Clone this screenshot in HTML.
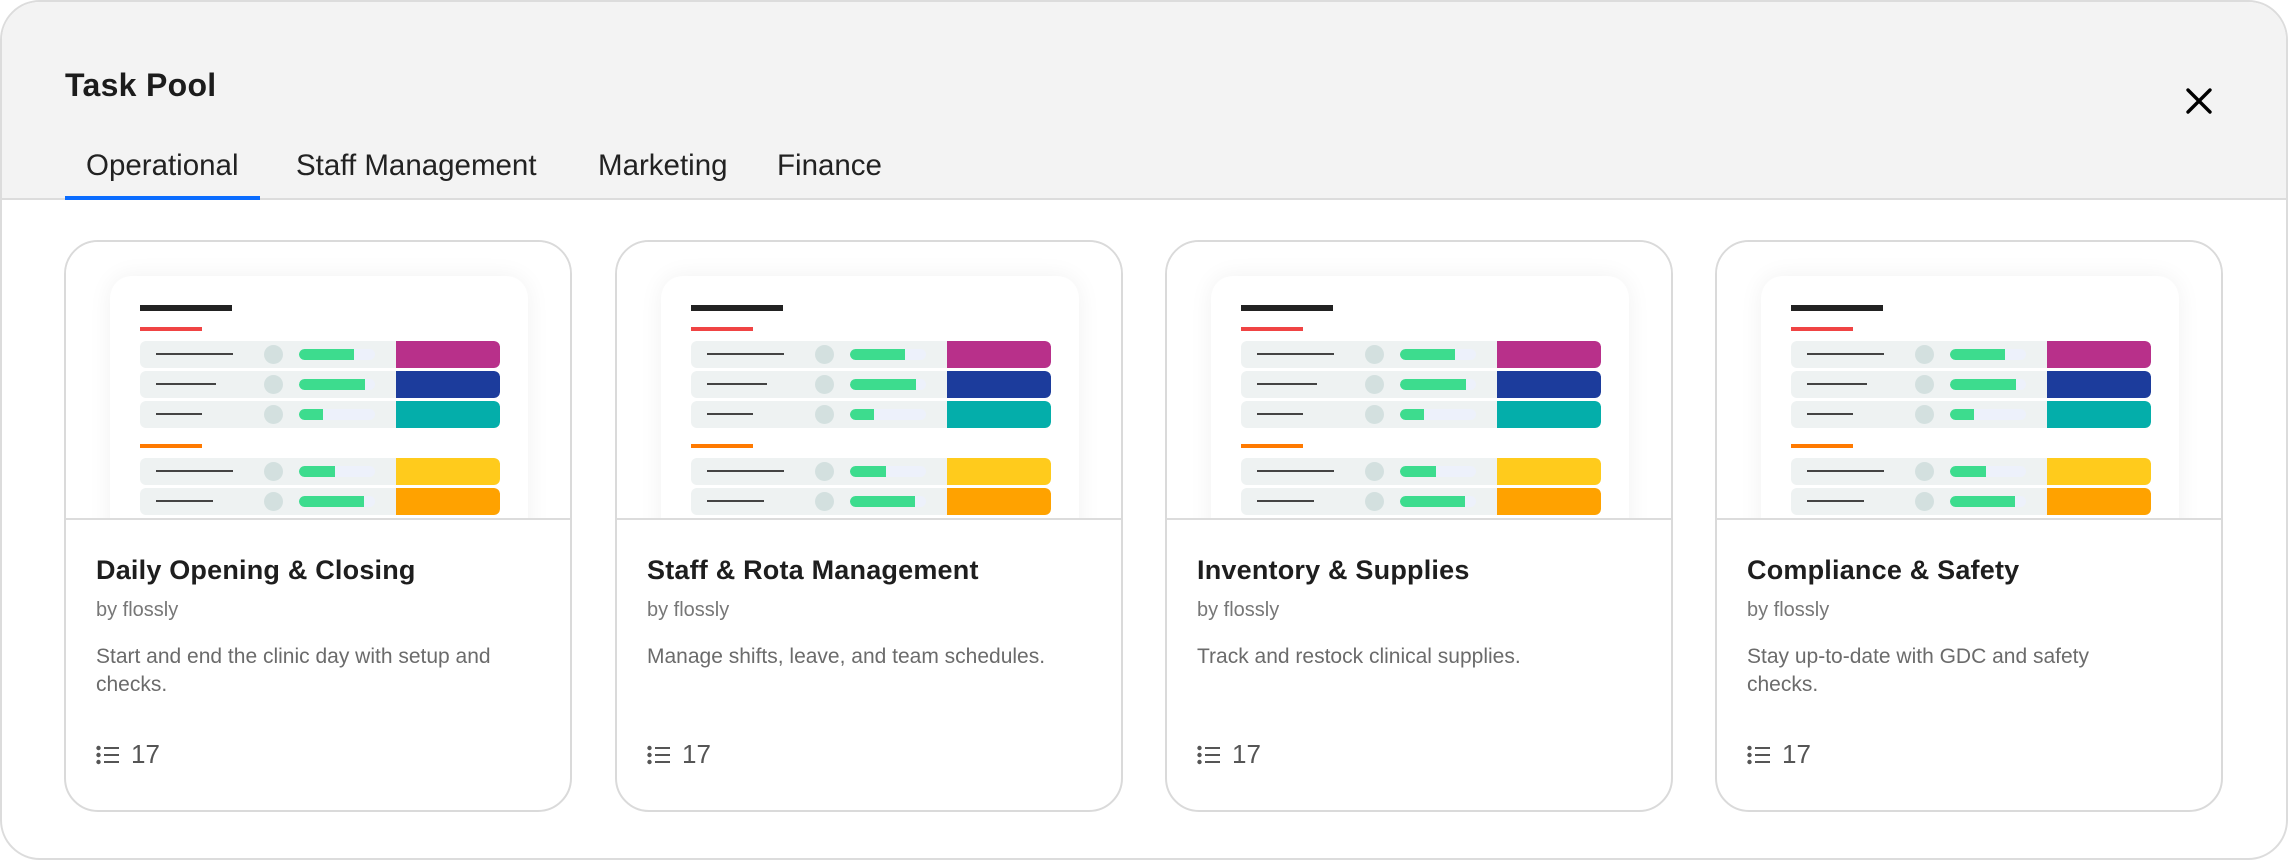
<!DOCTYPE html>
<html><head><meta charset="utf-8"><style>
*{box-sizing:border-box;margin:0;padding:0}
body{width:2288px;height:860px;background:#fff;font-family:"Liberation Sans",sans-serif;position:relative;overflow:hidden}
.outer{position:absolute;left:0;top:0;width:2288px;height:860px;border:2px solid #dcdcdc;border-radius:40px;overflow:hidden;background:#fff}
.head{position:absolute;left:0;top:0;right:0;height:198px;background:#f3f3f3;border-bottom:2px solid #dcdcdc}
.title{position:absolute;left:63px;top:65px;font-size:32px;font-weight:bold;color:#1c1c1c;letter-spacing:0.3px}
.tab{position:absolute;top:147px;font-size:29.5px;color:#222}
.ul{position:absolute;left:63px;top:194px;width:195px;height:4px;background:#0a6cff}
.card{position:absolute;top:240px;width:508px;height:572px;border:2px solid #dadada;border-radius:34px;overflow:hidden;background:#fff}
.img{position:absolute;left:0;top:0;width:100%;height:278px;overflow:hidden;background:#fff;border-bottom:2px solid #dcdcdc}
.panel{position:absolute;left:44px;top:34px;width:418px;height:300px;background:#fff;border-radius:22px;box-shadow:0 0 24px rgba(0,0,0,0.06)}
.a{position:absolute}
.row{position:absolute;width:360px;height:27px;background:#eef2f2;border-radius:6px;overflow:hidden}
.row .ln{position:absolute;left:16px;top:12px;height:2px;background:#444}
.row .c{position:absolute;left:124px;top:4px;width:19px;height:19px;border-radius:50%;background:#d3e0df}
.row .tr{position:absolute;left:159px;top:8px;width:76px;height:11px;border-radius:6px;background:#edf1fb;overflow:hidden}
.row .g{position:absolute;left:0;top:0;height:11px;background:#3ddc8e;border-radius:6px 0 0 6px}
.row .b{position:absolute;left:256px;top:0;width:104px;height:27px;border-radius:0 6px 6px 0}
.t{position:absolute;left:30px;top:313px;font-size:27px;font-weight:bold;color:#1e1e1e;letter-spacing:0.2px}
.by{position:absolute;left:30px;top:357px;font-size:20px;color:#777}
.d{position:absolute;left:30px;top:401px;font-size:21px;line-height:28px;color:#6b6b6b;width:460px}
.n{position:absolute;left:30px;top:497px;font-size:26px;color:#555;display:flex;align-items:center}
.n svg{margin-right:11px}
</style></head><body>
<div class="outer">
<div class="head">
<div class="title">Task Pool</div>
<div class="tab" style="left:84px">Operational</div>
<div class="tab" style="left:294px">Staff Management</div>
<div class="tab" style="left:596px">Marketing</div>
<div class="tab" style="left:775px">Finance</div>
<div class="ul"></div>
<svg style="position:absolute;left:2181px;top:83px" width="32" height="32" viewBox="0 0 32 32"><path d="M5 5L27 27M27 5L5 27" stroke="#000" stroke-width="3.4" stroke-linecap="round"/></svg>
</div>
</div>

<div class="card" style="left:64px">
<div class="img"><div class="panel"></div>
<div class="a" style="left:74px;top:63px;width:92px;height:6px;background:#222"></div>
<div class="a" style="left:74px;top:85px;width:62px;height:4px;background:#f04444"></div>
<div class="row" style="top:99px;left:74px"><div class="ln" style="width:77px"></div><div class="c"></div><div class="tr"><div class="g" style="width:55px"></div></div><div class="b" style="background:#b8308a"></div></div>
<div class="row" style="top:129px;left:74px"><div class="ln" style="width:60px"></div><div class="c"></div><div class="tr"><div class="g" style="width:66px"></div></div><div class="b" style="background:#1c3c9c"></div></div>
<div class="row" style="top:159px;left:74px"><div class="ln" style="width:46px"></div><div class="c"></div><div class="tr"><div class="g" style="width:24px"></div></div><div class="b" style="background:#04aeaa"></div></div>
<div class="a" style="left:74px;top:202px;width:62px;height:4px;background:#ff7a00"></div>
<div class="row" style="top:216px;left:74px"><div class="ln" style="width:77px"></div><div class="c"></div><div class="tr"><div class="g" style="width:36px"></div></div><div class="b" style="background:#ffcb1c"></div></div>
<div class="row" style="top:246px;left:74px"><div class="ln" style="width:57px"></div><div class="c"></div><div class="tr"><div class="g" style="width:65px"></div></div><div class="b" style="background:#ffa200"></div></div>
</div>
<div class="t">Daily Opening &amp; Closing</div>
<div class="by">by flossly</div>
<div class="d">Start and end the clinic day with setup and<br>checks.</div>
<div class="n"><svg width="24" height="20" viewBox="0 0 24 20"><circle cx="2.5" cy="3" r="2.2" fill="#555"/><circle cx="2.5" cy="10" r="2.2" fill="#555"/><circle cx="2.5" cy="17" r="2.2" fill="#555"/><path d="M8 3H23M8 10H23M8 17H23" stroke="#555" stroke-width="2"/></svg>17</div>
</div>

<div class="card" style="left:615px">
<div class="img"><div class="panel"></div>
<div class="a" style="left:74px;top:63px;width:92px;height:6px;background:#222"></div>
<div class="a" style="left:74px;top:85px;width:62px;height:4px;background:#f04444"></div>
<div class="row" style="top:99px;left:74px"><div class="ln" style="width:77px"></div><div class="c"></div><div class="tr"><div class="g" style="width:55px"></div></div><div class="b" style="background:#b8308a"></div></div>
<div class="row" style="top:129px;left:74px"><div class="ln" style="width:60px"></div><div class="c"></div><div class="tr"><div class="g" style="width:66px"></div></div><div class="b" style="background:#1c3c9c"></div></div>
<div class="row" style="top:159px;left:74px"><div class="ln" style="width:46px"></div><div class="c"></div><div class="tr"><div class="g" style="width:24px"></div></div><div class="b" style="background:#04aeaa"></div></div>
<div class="a" style="left:74px;top:202px;width:62px;height:4px;background:#ff7a00"></div>
<div class="row" style="top:216px;left:74px"><div class="ln" style="width:77px"></div><div class="c"></div><div class="tr"><div class="g" style="width:36px"></div></div><div class="b" style="background:#ffcb1c"></div></div>
<div class="row" style="top:246px;left:74px"><div class="ln" style="width:57px"></div><div class="c"></div><div class="tr"><div class="g" style="width:65px"></div></div><div class="b" style="background:#ffa200"></div></div>
</div>
<div class="t">Staff &amp; Rota Management</div>
<div class="by">by flossly</div>
<div class="d">Manage shifts, leave, and team schedules.</div>
<div class="n"><svg width="24" height="20" viewBox="0 0 24 20"><circle cx="2.5" cy="3" r="2.2" fill="#555"/><circle cx="2.5" cy="10" r="2.2" fill="#555"/><circle cx="2.5" cy="17" r="2.2" fill="#555"/><path d="M8 3H23M8 10H23M8 17H23" stroke="#555" stroke-width="2"/></svg>17</div>
</div>

<div class="card" style="left:1165px">
<div class="img"><div class="panel"></div>
<div class="a" style="left:74px;top:63px;width:92px;height:6px;background:#222"></div>
<div class="a" style="left:74px;top:85px;width:62px;height:4px;background:#f04444"></div>
<div class="row" style="top:99px;left:74px"><div class="ln" style="width:77px"></div><div class="c"></div><div class="tr"><div class="g" style="width:55px"></div></div><div class="b" style="background:#b8308a"></div></div>
<div class="row" style="top:129px;left:74px"><div class="ln" style="width:60px"></div><div class="c"></div><div class="tr"><div class="g" style="width:66px"></div></div><div class="b" style="background:#1c3c9c"></div></div>
<div class="row" style="top:159px;left:74px"><div class="ln" style="width:46px"></div><div class="c"></div><div class="tr"><div class="g" style="width:24px"></div></div><div class="b" style="background:#04aeaa"></div></div>
<div class="a" style="left:74px;top:202px;width:62px;height:4px;background:#ff7a00"></div>
<div class="row" style="top:216px;left:74px"><div class="ln" style="width:77px"></div><div class="c"></div><div class="tr"><div class="g" style="width:36px"></div></div><div class="b" style="background:#ffcb1c"></div></div>
<div class="row" style="top:246px;left:74px"><div class="ln" style="width:57px"></div><div class="c"></div><div class="tr"><div class="g" style="width:65px"></div></div><div class="b" style="background:#ffa200"></div></div>
</div>
<div class="t">Inventory &amp; Supplies</div>
<div class="by">by flossly</div>
<div class="d">Track and restock clinical supplies.</div>
<div class="n"><svg width="24" height="20" viewBox="0 0 24 20"><circle cx="2.5" cy="3" r="2.2" fill="#555"/><circle cx="2.5" cy="10" r="2.2" fill="#555"/><circle cx="2.5" cy="17" r="2.2" fill="#555"/><path d="M8 3H23M8 10H23M8 17H23" stroke="#555" stroke-width="2"/></svg>17</div>
</div>

<div class="card" style="left:1715px">
<div class="img"><div class="panel"></div>
<div class="a" style="left:74px;top:63px;width:92px;height:6px;background:#222"></div>
<div class="a" style="left:74px;top:85px;width:62px;height:4px;background:#f04444"></div>
<div class="row" style="top:99px;left:74px"><div class="ln" style="width:77px"></div><div class="c"></div><div class="tr"><div class="g" style="width:55px"></div></div><div class="b" style="background:#b8308a"></div></div>
<div class="row" style="top:129px;left:74px"><div class="ln" style="width:60px"></div><div class="c"></div><div class="tr"><div class="g" style="width:66px"></div></div><div class="b" style="background:#1c3c9c"></div></div>
<div class="row" style="top:159px;left:74px"><div class="ln" style="width:46px"></div><div class="c"></div><div class="tr"><div class="g" style="width:24px"></div></div><div class="b" style="background:#04aeaa"></div></div>
<div class="a" style="left:74px;top:202px;width:62px;height:4px;background:#ff7a00"></div>
<div class="row" style="top:216px;left:74px"><div class="ln" style="width:77px"></div><div class="c"></div><div class="tr"><div class="g" style="width:36px"></div></div><div class="b" style="background:#ffcb1c"></div></div>
<div class="row" style="top:246px;left:74px"><div class="ln" style="width:57px"></div><div class="c"></div><div class="tr"><div class="g" style="width:65px"></div></div><div class="b" style="background:#ffa200"></div></div>
</div>
<div class="t">Compliance &amp; Safety</div>
<div class="by">by flossly</div>
<div class="d">Stay up-to-date with GDC and safety<br>checks.</div>
<div class="n"><svg width="24" height="20" viewBox="0 0 24 20"><circle cx="2.5" cy="3" r="2.2" fill="#555"/><circle cx="2.5" cy="10" r="2.2" fill="#555"/><circle cx="2.5" cy="17" r="2.2" fill="#555"/><path d="M8 3H23M8 10H23M8 17H23" stroke="#555" stroke-width="2"/></svg>17</div>
</div>
</body></html>
